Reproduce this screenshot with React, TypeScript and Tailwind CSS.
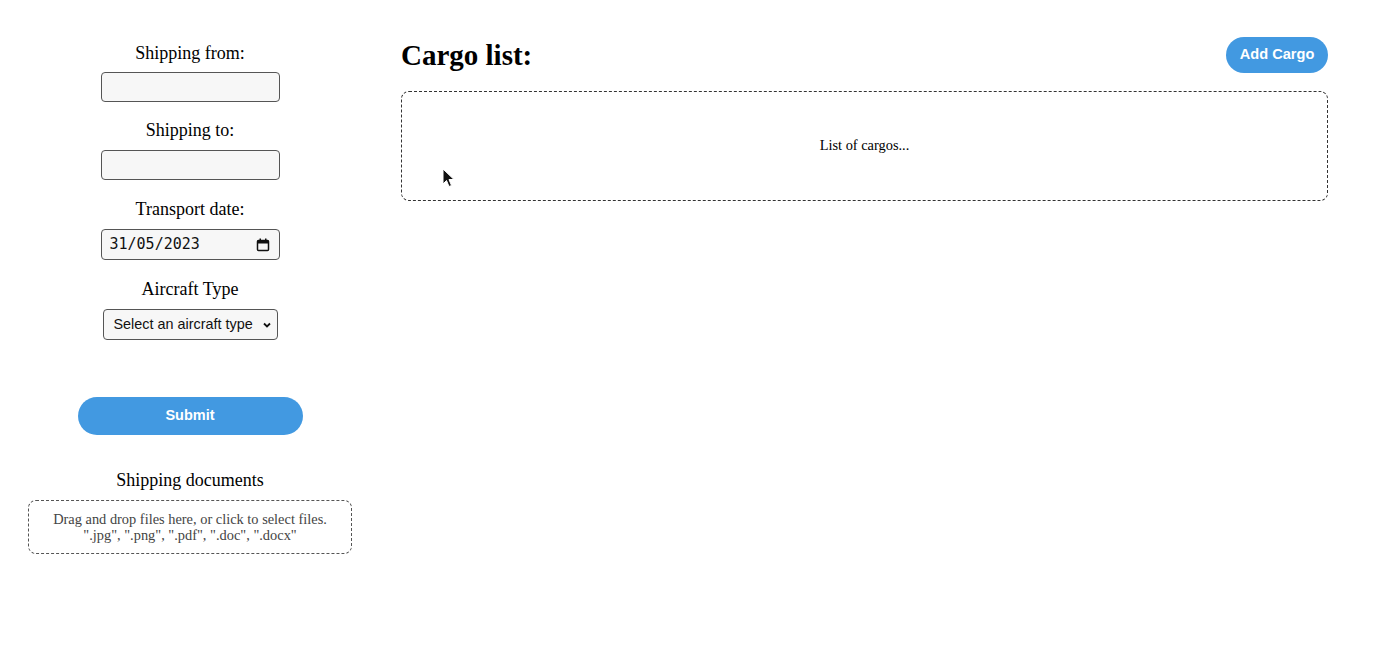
import React from "react";

export default function App() {
  const serif = { fontFamily: '"Liberation Serif", "Times New Roman", serif' };
  const sans = { fontFamily: '"Liberation Sans", Arial, sans-serif' };
  return (
    <div className="w-[1380px] h-[666px] bg-white relative overflow-hidden" style={serif}>
      <div className="flex">
        {/* Left column */}
        <div className="ml-[28px] w-[324px] flex flex-col items-center">
          <div className="mt-[43px] text-[18px] leading-[21px] text-black">Shipping from:</div>
          <input className="mt-[8px] w-[179px] h-[30px] bg-[#f7f7f7] border border-[#555] rounded-[4px] outline-none" />
          <div className="mt-[18px] text-[18px] leading-[21px] text-black">Shipping to:</div>
          <input className="mt-[9px] w-[179px] h-[30px] bg-[#f7f7f7] border border-[#555] rounded-[4px] outline-none" />
          <div className="mt-[19px] text-[18px] leading-[21px] text-black">Transport date:</div>
          <div className="mt-[9px] w-[179px] h-[31px] bg-[#f7f7f7] border border-[#555] rounded-[4px] flex items-center justify-between pl-[8px] pr-[9px]">
            <span className="text-[15px] text-[#111]" style={{ fontFamily: '"DejaVu Sans Mono", "Liberation Mono", monospace' }}>31/05/2023</span>
            <svg width="14" height="14" viewBox="0 0 14 14">
              <rect x="1.5" y="2.5" width="11" height="10" rx="1" fill="none" stroke="#111" strokeWidth="1.5" />
              <rect x="1.5" y="2.5" width="11" height="3" fill="#111" />
              <rect x="3.5" y="0.5" width="1.5" height="2.5" fill="#111" />
              <rect x="9" y="0.5" width="1.5" height="2.5" fill="#111" />
            </svg>
          </div>
          <div className="mt-[19px] text-[18px] leading-[21px] text-black">Aircraft Type</div>
          <div className="mt-[9px] w-[175px] h-[31px] bg-[#f7f7f7] border border-[#555] rounded-[4px] flex items-center justify-between pl-[10px] pr-[5px]">
            <span className="text-[14.4px] text-[#111]" style={sans}>Select an aircraft type</span>
            <svg width="10" height="10" viewBox="0 0 10 10">
              <path d="M2 3.5 L5 6.5 L8 3.5" fill="none" stroke="#111" strokeWidth="1.8" />
            </svg>
          </div>
          <button className="mt-[57px] w-[225px] h-[38px] rounded-full bg-[#4299e1] text-white text-[14.5px] font-bold" style={sans}>
            Submit
          </button>
          <div className="mt-[35px] text-[18px] leading-[21px] text-black">Shipping documents</div>
          <div className="mt-[9px] w-[324px] h-[54px] border border-dashed border-[#555] rounded-[8px] flex flex-col items-center justify-center text-[14.4px] leading-[16px] text-[#444]">
            <span>Drag and drop files here, or click to select files.</span>
            <span>".jpg", ".png", ".pdf", ".doc", ".docx"</span>
          </div>
        </div>

        {/* Right column */}
        <div className="ml-[49px] w-[927px] flex flex-col">
          <div className="mt-[37px] h-[36px] flex items-center justify-between">
            <h1 className="text-[29px] font-bold leading-[36px] text-black">Cargo list:</h1>
            <button className="w-[102px] h-[36px] rounded-full bg-[#4299e1] text-white text-[14.6px] font-bold" style={sans}>
              Add Cargo
            </button>
          </div>
          <div className="mt-[18px] h-[110px] border border-dashed border-[#333] rounded-[8px] flex items-center justify-center text-[14.4px] text-black">
            List of cargos...
          </div>
        </div>
      </div>

      {/* mouse cursor */}
      <svg className="absolute left-[442px] top-[168px]" width="14" height="20" viewBox="0 0 14 20">
        <path d="M1 1 L1 16 L4.5 12.5 L7 18.5 L9.5 17.5 L7 11.5 L12 11.5 Z" fill="#111" stroke="#fff" strokeWidth="1" />
      </svg>
    </div>
  );
}
